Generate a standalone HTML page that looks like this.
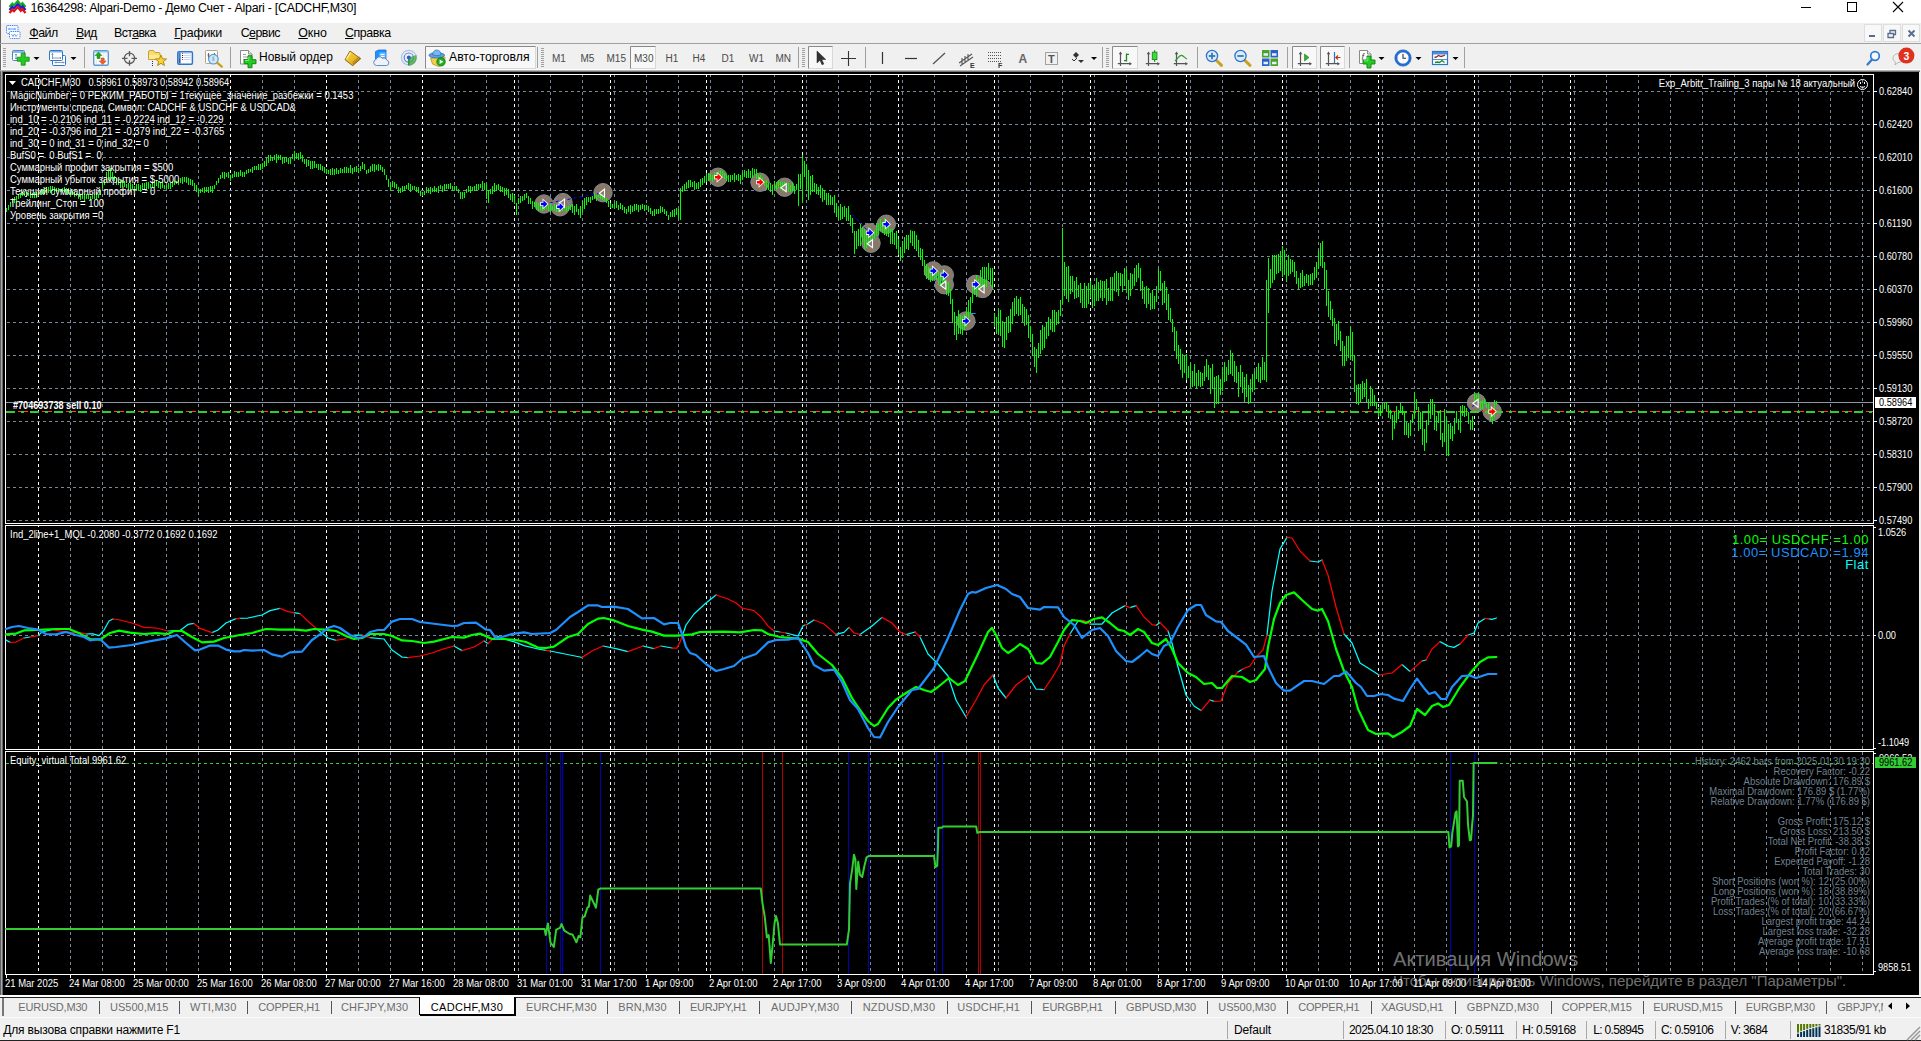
<!DOCTYPE html>
<html><head><meta charset="utf-8"><title>CADCHF,M30</title>
<style>
html,body{margin:0;padding:0}
body{width:1921px;height:1041px;overflow:hidden;position:relative;background:#f0f0f0;font-family:"Liberation Sans",sans-serif;font-size:12px;color:#000}
span{white-space:nowrap;line-height:1}
u{text-decoration:underline;text-underline-offset:1px}
</style></head><body>
<div style="position:absolute;left:0;top:0;width:1921px;height:23px;background:#fff"></div>
<svg style="position:absolute;left:0;top:0" width="30" height="16"><path d="M9.500 7l2.800-3.300l1.700 1.600l3.800-4.200l3 3.800l1.700-1.700l3 3.800" fill="none" stroke="#10b010" stroke-width="2.200"/><path d="M9.500 10l2.800-3.300l1.700 1.600l3.800-4.200l3 3.800l1.700-1.700l3 3.800" fill="none" stroke="#2a18d8" stroke-width="2.200"/><path d="M9.500 13l2.800-3.300l1.700 1.600l3.800-4.200l3 3.800l1.700-1.700l3 3.800" fill="none" stroke="#e01010" stroke-width="2.200"/></svg>
<span style="position:absolute;left:30.500px;top:2px;font-size:12.400px;letter-spacing:-0.270px">16364298: Alpari-Demo - Демо Счет - Alpari - [CADCHF,M30]</span>
<svg style="position:absolute;left:1780px;top:0" width="141" height="22"><path d="M21 7.500h10" stroke="#000"/><rect x="67.500" y="2.500" width="9" height="9" fill="none" stroke="#000"/><path d="M113 2l10 10M123 2l-10 10" stroke="#000" stroke-width="1.100"/></svg>
<div style="position:absolute;left:0;top:0;width:1px;height:1041px;background:#666"></div><div style="position:absolute;left:1px;top:44px;width:1px;height:25px;background:#fff"></div>
<div style="position:absolute;left:0;top:43px;width:1921px;height:1px;background:#a0a0a0"></div>
<svg style="position:absolute;left:5px;top:24px" width="18" height="18"><rect x="1.500" y="1.500" width="11.500" height="8" rx="1" fill="#f4f8fe" stroke="#4a8af0" stroke-dasharray="1.500 0.700"/><path d="M3.500 5h7M4.500 4l-1 1l1 1M9.500 4l1 1l-1 1" stroke="#4a8af0" fill="none" stroke-width="0.800"/><rect x="4.500" y="7.500" width="10.500" height="7" rx="1" fill="#fff" stroke="#4a8af0" stroke-dasharray="1.500 0.700"/><path d="M6.500 10l1.500 2.500l1.500-2.500l1.500 2.500l1.500-2" stroke="#4a8af0" fill="none" stroke-width="0.800"/></svg>
<span style="position:absolute;left:29.3px;top:26.5px;font-size:12.4px;letter-spacing:-0.521px"><u>Ф</u>айл</span><span style="position:absolute;left:76px;top:26.5px;font-size:12.4px;letter-spacing:-0.578px"><u>В</u>ид</span><span style="position:absolute;left:114px;top:26.5px;font-size:12.4px;letter-spacing:-0.627px">Вст<u>а</u>вка</span><span style="position:absolute;left:174.3px;top:26.5px;font-size:12.4px;letter-spacing:-0.227px"><u>Г</u>рафики</span><span style="position:absolute;left:240.7px;top:26.5px;font-size:12.4px;letter-spacing:-0.527px">С<u>е</u>рвис</span><span style="position:absolute;left:298.3px;top:26.5px;font-size:12.4px;letter-spacing:-0.104px"><u>О</u>кно</span><span style="position:absolute;left:345px;top:26.5px;font-size:12.4px;letter-spacing:-0.420px"><u>С</u>правка</span>
<svg style="position:absolute;left:1864px;top:24px" width="57" height="19"><rect x="0.500" y="0.500" width="17" height="17" fill="#f8f8f8" stroke="#dedede"/><rect x="19.500" y="0.500" width="17" height="17" fill="#f8f8f8" stroke="#dedede"/><rect x="38.500" y="0.500" width="17" height="17" fill="#f8f8f8" stroke="#dedede"/><path d="M5 12h6" stroke="#5a6e8c" stroke-width="2"/><path d="M24 9.500h5.500v4h-5.500zM26 9v-2.500h5.500v4h-2" fill="none" stroke="#5a6e8c" stroke-width="1.300"/><path d="M44.500 6.500l6 6M50.500 6.500l-6 6" stroke="#5a6e8c" stroke-width="1.900"/></svg>
<svg style="position:absolute;left:0;top:44px" width="1921" height="26" font-family="Liberation Sans, sans-serif"><rect x="3" y="4" width="3" height="1" fill="#a0a0a0"/><rect x="3" y="6" width="3" height="1" fill="#a0a0a0"/><rect x="3" y="8" width="3" height="1" fill="#a0a0a0"/><rect x="3" y="10" width="3" height="1" fill="#a0a0a0"/><rect x="3" y="12" width="3" height="1" fill="#a0a0a0"/><rect x="3" y="14" width="3" height="1" fill="#a0a0a0"/><rect x="3" y="16" width="3" height="1" fill="#a0a0a0"/><rect x="3" y="18" width="3" height="1" fill="#a0a0a0"/><rect x="3" y="20" width="3" height="1" fill="#a0a0a0"/><rect x="3" y="22" width="3" height="1" fill="#a0a0a0"/><g><rect x="12.500" y="6.500" width="12" height="10" rx="1" fill="#fff" stroke="#4a86c5"/><rect x="13" y="7" width="11" height="2" fill="#8db7e6"/><path d="M16 10v5M15 11l1-1l1 1M15 14l1 1l1-1" stroke="#5a7fb0" fill="none" stroke-width="0.800"/><path d="M21.200 9.200h4v4h4v4h-4v4h-4v-4h-4v-4h4z" fill="#22cc22" stroke="#118811" stroke-width="0.800"/></g><path d="M33.5 13h6l-3 3z" fill="#000"/><g><rect x="52.500" y="11.500" width="13" height="10" rx="1" fill="#fff" stroke="#2e75c8"/><path d="M55 18.500h9M56 17.500l-1 1l1 1M63 17.500l1 1l-1 1" stroke="#6d8fb8" fill="none" stroke-width="0.900"/><rect x="49.500" y="6.500" width="13" height="10" rx="1" fill="#fff" stroke="#2e75c8"/><rect x="50" y="7" width="12" height="1.500" fill="#7fb0e8"/><path d="M52.500 9.500v5.500M52 14h9M51.500 10.500l1-1l1 1M60 13l1 1l-1 1" stroke="#6d8fb8" fill="none" stroke-width="0.900"/></g><path d="M70.5 13h6l-3 3z" fill="#000"/><rect x="84" y="3" width="1" height="21" fill="#a0a0a0"/><g><rect x="93.700" y="6.700" width="14.600" height="14.600" rx="1.500" fill="#fff" stroke="#5b9bd5" stroke-width="1.400"/><rect x="94" y="7" width="14" height="1.500" fill="#8fc0f0"/><path d="M97 14.500v-3h-2l3.500-3.500l3.500 3.500h-2v3z" fill="#1eaa1e" stroke="#0f7a0f" stroke-width="0.500"/><path d="M101.200 14v3h-2l3.500 3.500l3.500-3.500h-2v-3z" fill="#f0602a" stroke="#c03a10" stroke-width="0.500"/><path d="M95.500 17h3M95.500 19h3M103 10h3.500M103 12h3.500" stroke="#d0dce8" stroke-dasharray="1.500 1"/></g><g stroke="#585858" fill="none" stroke-width="1.300"><circle cx="129.500" cy="14.300" r="5.200"/><path d="M129.500 7v5.300M129.500 16.300v5.500M122 14.300h5.500M131.500 14.300h5.500"/></g><g><path d="M148.500 8a1.500 1.500 0 0 1 1.500-1.500h3.500l1.500 2h4a1 1 0 0 1 1 1v6h-11.500z" fill="#f7dc72" stroke="#c49a1c" stroke-width="0.900"/><path d="M149 11h10.500v4h-10.500z" fill="#fbe99a"/><polygon points="161.0,11.0 162.5,14.8 166.5,15.0 163.4,17.6 164.4,21.5 161.0,19.3 157.6,21.5 158.6,17.6 155.5,15.0 159.5,14.8" fill="#f5d53a" stroke="#b8860b" stroke-width="1"/><path d="M152.500 17v5" stroke="#333" stroke-dasharray="1 1"/></g><g><rect x="177.800" y="7.700" width="14.600" height="12.600" rx="1.200" fill="#fff" stroke="#2e75c8" stroke-width="1.500"/><rect x="178.500" y="8.500" width="2.200" height="11" fill="#3a7fd0"/><rect x="179" y="15" width="1" height="4" fill="#555"/><path d="M183.500 9.500h8M183.500 11.500h8M183.500 13.500h8M183.500 15.500h8" stroke="#c6d8f5"/><rect x="182" y="9" width="1" height="1" fill="#e02020"/><rect x="182" y="11" width="1" height="1" fill="#222"/><rect x="182" y="13" width="1" height="1" fill="#222"/><rect x="182" y="15" width="1" height="1" fill="#e02020"/></g><g><rect x="205.500" y="6.500" width="12" height="13" rx="0.800" fill="#fbfbfb" stroke="#b0a890"/><path d="M208.500 9v6M214.500 9v4M207.500 11h2M213.500 10.500h2" stroke="#555" stroke-width="0.900"/><circle cx="213.400" cy="15.200" r="4.800" fill="#cfe6fa" fill-opacity="0.920" stroke="#5b9bd5" stroke-width="1.200"/><rect x="212.300" y="12.500" width="2" height="4.500" fill="#9ab4c8"/><path d="M217.300 18.800l4.500 3.800" stroke="#c9a020" stroke-width="2.400" stroke-linecap="round"/></g><rect x="230" y="3" width="1" height="21" fill="#a0a0a0"/><g><path d="M240.500 6.500h8l3.500 3.500v10h-11.500z" fill="#fff" stroke="#8a8a8a"/><path d="M248.500 6.500v3.500h3.500" fill="#e8e8e8" stroke="#8a8a8a"/><path d="M243 10.500h3M243 13h6M243 15.500h4" stroke="#9a9a9a"/><path d="M248 11.7h4v4h4v4h-4v4h-4v-4h-4v-4h4z" fill="#22cc22" stroke="#0f7f0f" stroke-width="0.900"/><path d="M248.8 12.7v3.8h-3.8" stroke="#8af08a" stroke-width="0.900" fill="none"/></g><defs><linearGradient id="gbk" x1="0" y1="0" x2="1" y2="1"><stop offset="0" stop-color="#fbe04a"/><stop offset="0.600" stop-color="#e6b422"/><stop offset="1" stop-color="#b07c10"/></linearGradient></defs><g><path d="M350 7l10.700 7.700l-8 7l-7.700-6z" fill="url(#gbk)" stroke="#8a5e0c" stroke-width="0.900" stroke-linejoin="round"/><path d="M353 20l7.200-6.200M352.600 18.600l6.800-5.800" stroke="#8a5e0c" stroke-width="0.600" fill="none"/><path d="M350.500 8.500l-4 6.500" stroke="#fff4b0" stroke-width="1.200"/></g><g><path d="M375.500 7.500l3-1.500h7.500v9h-10.500z" fill="#1e90ff" stroke="#1a6fd0" stroke-width="0.800"/><path d="M379.500 8.500h6v6h-6z" fill="#6fc0ff"/><path d="M380.500 10.500h4M380.500 12.500h4" stroke="#fff" stroke-width="0.900"/><path d="M376.500 21.500a3 3 0 0 1-0.500-5.900a3.600 3.600 0 0 1 6.500-1.200a3 3 0 0 1 4.300 1.800a2.700 2.700 0 0 1-0.300 5.300z" fill="#eef3fb" stroke="#5a7fb8" stroke-width="0.900"/></g><g fill="none"><circle cx="408.800" cy="13.600" r="7.300" stroke="#a8c4ee" stroke-width="1.200"/><circle cx="408.800" cy="13.600" r="4.600" stroke="#5a86dc" stroke-width="1.200"/><path d="M408.800 13.600v8a8 8 0 0 0 7.600-10.500z" fill="#4aa84a" fill-opacity="0.800"/><path d="M408.800 13.600v8" stroke="#2f9a2f" stroke-width="1.600"/><circle cx="408.800" cy="13.400" r="2" fill="#2a5fd0"/></g><rect x="425.500" y="2.500" width="110" height="22" fill="#f8f8f8" stroke="#d8d8d8"/><path d="M425.500 24.500v-22h110" fill="none" stroke="#8a8a8a"/><g><path d="M430.500 14l2 6l6 2.500l6-2.500l0.500-7z" fill="#f2cf4a" stroke="#b8902a" stroke-width="0.800"/><ellipse cx="436.800" cy="11.300" rx="7.800" ry="2.700" fill="#5aa0e0" stroke="#2f6fb8" stroke-width="0.800"/><path d="M432.800 10.800c0-3 1.500-4.800 4-4.800s4 1.800 4 4.800c-2 1-6 1-8 0z" fill="#7ab8ee" stroke="#2f6fb8" stroke-width="0.700"/><circle cx="441" cy="17.800" r="4.200" fill="#1fae1f" stroke="#0f7a0f" stroke-width="0.800"/><path d="M439.600 15.500v4.600l3.800-2.300z" fill="#fff"/></g><rect x="537" y="3" width="1" height="21" fill="#a0a0a0"/><rect x="541" y="4" width="3" height="1" fill="#a0a0a0"/><rect x="541" y="6" width="3" height="1" fill="#a0a0a0"/><rect x="541" y="8" width="3" height="1" fill="#a0a0a0"/><rect x="541" y="10" width="3" height="1" fill="#a0a0a0"/><rect x="541" y="12" width="3" height="1" fill="#a0a0a0"/><rect x="541" y="14" width="3" height="1" fill="#a0a0a0"/><rect x="541" y="16" width="3" height="1" fill="#a0a0a0"/><rect x="541" y="18" width="3" height="1" fill="#a0a0a0"/><rect x="541" y="20" width="3" height="1" fill="#a0a0a0"/><rect x="541" y="22" width="3" height="1" fill="#a0a0a0"/><rect x="630.500" y="2.500" width="25" height="22" fill="#f8f8f8" stroke="#d8d8d8"/><path d="M630.500 24.500v-22h25" fill="none" stroke="#8a8a8a"/><rect x="798" y="3" width="1" height="21" fill="#a0a0a0"/><rect x="802" y="4" width="3" height="1" fill="#a0a0a0"/><rect x="802" y="6" width="3" height="1" fill="#a0a0a0"/><rect x="802" y="8" width="3" height="1" fill="#a0a0a0"/><rect x="802" y="10" width="3" height="1" fill="#a0a0a0"/><rect x="802" y="12" width="3" height="1" fill="#a0a0a0"/><rect x="802" y="14" width="3" height="1" fill="#a0a0a0"/><rect x="802" y="16" width="3" height="1" fill="#a0a0a0"/><rect x="802" y="18" width="3" height="1" fill="#a0a0a0"/><rect x="802" y="20" width="3" height="1" fill="#a0a0a0"/><rect x="802" y="22" width="3" height="1" fill="#a0a0a0"/><rect x="808.500" y="2.500" width="24" height="22" fill="#f8f8f8" stroke="#d8d8d8"/><path d="M808.500 24.500v-22h24" fill="none" stroke="#8a8a8a"/><path d="M817 7v12l3-2.800l2 4.600l1.800-0.800l-2-4.500h4z" fill="#333" stroke="#222" stroke-width="0.500"/><path d="M848.500 7v15M841 14.500h15" stroke="#333" stroke-width="1.100"/><rect x="865" y="3" width="1" height="21" fill="#a0a0a0"/><path d="M882.500 8v12" stroke="#333" stroke-width="1.200"/><path d="M905 14.500h12" stroke="#333" stroke-width="1.200"/><path d="M933 20l12-11" stroke="#555" stroke-width="1.300"/><g stroke="#555" stroke-width="1.100" fill="none"><path d="M959 19l13-9M960 22l13-9M962 14v7M965 12v7M968 10v7"/></g><text x="970" y="24" font-size="7" font-weight="bold" fill="#333">E</text><g stroke="#555" stroke-dasharray="1 1"><path d="M988 8.500h13M988 11.500h13M988 14.500h13M988 17.500h13"/></g><text x="998" y="24" font-size="7" font-weight="bold" fill="#333">F</text><text x="1018.500" y="19" font-size="12" font-weight="bold" fill="#666">A</text><rect x="1045.500" y="8.500" width="12" height="12" fill="none" stroke="#555" stroke-dasharray="1 1"/><text x="1048" y="19" font-size="11" font-weight="bold" fill="#555">T</text><g fill="#333"><path d="M1073 11l3-3l3 3l-3 3z"/><path d="M1078 16l3 3l3-3z"/><path d="M1072 15l2 2l3-3" stroke="#333" fill="none"/></g><path d="M1091 13h6l-3 3z" fill="#000"/><rect x="1102" y="3" width="1" height="21" fill="#a0a0a0"/><rect x="1106" y="4" width="3" height="1" fill="#a0a0a0"/><rect x="1106" y="6" width="3" height="1" fill="#a0a0a0"/><rect x="1106" y="8" width="3" height="1" fill="#a0a0a0"/><rect x="1106" y="10" width="3" height="1" fill="#a0a0a0"/><rect x="1106" y="12" width="3" height="1" fill="#a0a0a0"/><rect x="1106" y="14" width="3" height="1" fill="#a0a0a0"/><rect x="1106" y="16" width="3" height="1" fill="#a0a0a0"/><rect x="1106" y="18" width="3" height="1" fill="#a0a0a0"/><rect x="1106" y="20" width="3" height="1" fill="#a0a0a0"/><rect x="1106" y="22" width="3" height="1" fill="#a0a0a0"/><rect x="1112.500" y="2.500" width="25" height="22" fill="#f8f8f8" stroke="#d8d8d8"/><path d="M1112.500 24.500v-22h25" fill="none" stroke="#8a8a8a"/><g stroke="#555" fill="none" stroke-width="1.200"><path d="M1120.5 9v13M1117.8 19.700h13"/></g><path d="M1120.5 7.500l-1.800 2.700h3.600zM1132.0 19.700l-2.700-1.800v3.600z" fill="#555"/><path d="M1126.500 9.500v8M1126.500 10.300h2.500M1124 16.600h2.500" stroke="#1c8a1c" fill="none" stroke-width="1.300"/><g stroke="#555" fill="none" stroke-width="1.200"><path d="M1148.5 9v13M1145.8 19.700h13"/></g><path d="M1148.5 7.500l-1.800 2.700h3.600zM1160.0 19.700l-2.700-1.800v3.600z" fill="#555"/><path d="M1154.600 6.300v11.500" stroke="#1c8a1c" stroke-width="1.200"/><rect x="1152.300" y="8.200" width="4.600" height="7.400" fill="#3ae03a" stroke="#1c8a1c" stroke-width="0.900"/><g stroke="#555" fill="none" stroke-width="1.200"><path d="M1176.5 9v13M1173.8 19.700h13"/></g><path d="M1176.5 7.500l-1.800 2.700h3.600zM1188.0 19.700l-2.700-1.800v3.600z" fill="#555"/><path d="M1175 17c2.500-2 4-6 6.500-5.700c2 0.300 3.500 3 5.500 3.700" stroke="#2a9a2a" fill="none" stroke-width="1.200"/><rect x="1197" y="3" width="1" height="21" fill="#a0a0a0"/><g><path d="M1216 16l5.500 5.300" stroke="#c9a020" stroke-width="3" stroke-linecap="round"/><circle cx="1212" cy="12" r="5.600" fill="#d8ecfb" stroke="#2f72c8" stroke-width="1.300"/><path d="M1208.8 12h6.400M1212 8.800v6.400" stroke="#3f7fb8" stroke-width="1.900"/></g><g><path d="M1244.5 16l5.500 5.300" stroke="#c9a020" stroke-width="3" stroke-linecap="round"/><circle cx="1240.5" cy="12" r="5.600" fill="#d8ecfb" stroke="#2f72c8" stroke-width="1.300"/><path d="M1237.3 12h6.400" stroke="#3f7fb8" stroke-width="1.900"/></g><g><rect x="1262" y="6" width="7.500" height="7.500" fill="#4aa32a"/><rect x="1270.500" y="6" width="7.500" height="7.500" fill="#2a63c8"/><rect x="1262" y="14.500" width="7.500" height="7.500" fill="#2a63c8"/><rect x="1270.500" y="14.500" width="7.500" height="7.500" fill="#4aa32a"/><path d="M1263.500 10.500h4.500M1272 10.500h4.500M1263.500 19h4.500M1272 19h4.500" stroke="#e8f0ff" stroke-width="2.500"/></g><rect x="1287" y="3" width="1" height="21" fill="#a0a0a0"/><rect x="1292.500" y="2.500" width="24" height="22" fill="#f8f8f8" stroke="#d8d8d8"/><path d="M1292.500 24.500v-22h24" fill="none" stroke="#8a8a8a"/><g stroke="#555" fill="none" stroke-width="1.200"><path d="M1300.5 9v13M1297.8 19.700h13"/></g><path d="M1300.5 7.500l-1.800 2.700h3.600zM1312.0 19.700l-2.700-1.800v3.600z" fill="#555"/><path d="M1304.500 10v7l4.500-3.500z" fill="#2fae2f" stroke="#1c8a1c" stroke-width="0.600"/><rect x="1320.500" y="2.500" width="24" height="22" fill="#f8f8f8" stroke="#d8d8d8"/><path d="M1320.500 24.500v-22h24" fill="none" stroke="#8a8a8a"/><g stroke="#555" fill="none" stroke-width="1.200"><path d="M1328.5 9v13M1325.8 19.700h13"/></g><path d="M1328.5 7.500l-1.800 2.700h3.600zM1340.0 19.700l-2.700-1.800v3.600z" fill="#555"/><path d="M1334.500 8v11" stroke="#2e6fc0" stroke-width="1.200"/><path d="M1340.500 13.500h-4.500M1338 11.500l-2.200 2l2.200 2" stroke="#c03010" fill="none" stroke-width="1.100"/><rect x="1349" y="3" width="1" height="21" fill="#a0a0a0"/><g><path d="M1359.500 6.500h8l3.500 3.500v9.500h-11.500z" fill="#fff" stroke="#8a8a8a"/><path d="M1367.500 6.500v3.500h3.500" fill="#e8e8e8" stroke="#8a8a8a"/><text x="1361.500" y="16" font-size="9" font-style="italic" fill="#444">f</text><path d="M1367 12h4v4h4v4h-4v4h-4v-4h-4v-4h4z" fill="#22cc22" stroke="#0f7f0f" stroke-width="0.900"/><path d="M1367.8 13v3.8h-3.8" stroke="#8af08a" stroke-width="0.900" fill="none"/></g><path d="M1378.5 13h6l-3 3z" fill="#000"/><g><circle cx="1403" cy="14" r="6.900" fill="#fff" stroke="#1e6fd8" stroke-width="2.400"/><circle cx="1403" cy="14" r="8.200" fill="none" stroke="#0f4fa8" stroke-width="0.600"/><path d="M1403 10v4.300h3" stroke="#333" fill="none" stroke-width="1.100"/><path d="M1403 8.300v1M1403 18.700v1M1397.300 14h1M1407.700 14h1" stroke="#888" stroke-width="0.800"/></g><path d="M1415.5 13h6l-3 3z" fill="#000"/><g><rect x="1432.500" y="7.500" width="15" height="13" fill="#fff" stroke="#2e75c8" stroke-width="1.200"/><rect x="1433" y="8" width="14" height="2.500" fill="#4a8fe0"/><path d="M1433 15.500h14" stroke="#2e75c8" stroke-width="0.800"/><path d="M1434.500 13.500l2-0.500l2-1.500l2.500 1l2-0.500l2-1" stroke="#a02010" fill="none" stroke-width="1.300"/><path d="M1435 18.500l2.500-0.500l2 0.500l2.500-2l2.500 2" stroke="#1c8a2c" fill="none" stroke-width="1.300"/></g><path d="M1452.5 13h6l-3 3z" fill="#000"/><rect x="1464" y="3" width="1" height="21" fill="#a0a0a0"/><g><circle cx="1875" cy="12" r="4.300" fill="#f4f9ff" stroke="#2f7ad0" stroke-width="1.700"/><path d="M1872 15.500l-4.500 5" stroke="#2f7ad0" stroke-width="2.200" stroke-linecap="round"/></g><g><path d="M1893 14a5.500 4.500 0 1 1 5 4.500l-3 2.500l0.500-3a5 4 0 0 1-2.500-4z" fill="#f0f0f0" stroke="#b8b8b8"/><circle cx="1906.400" cy="11.600" r="8" fill="#e0301e"/><text x="1906.400" y="15.500" font-size="10.500" font-weight="bold" fill="#fff" text-anchor="middle">3</text></g></svg><span style="position:absolute;left:552px;top:54px;font-size:10px;color:#4a4a4a">M1</span><span style="position:absolute;left:580.5px;top:54px;font-size:10px;color:#4a4a4a">M5</span><span style="position:absolute;left:606.5px;top:54px;font-size:10px;color:#4a4a4a">M15</span><span style="position:absolute;left:634px;top:54px;font-size:10px;color:#4a4a4a">M30</span><span style="position:absolute;left:665.5px;top:54px;font-size:10px;color:#4a4a4a">H1</span><span style="position:absolute;left:692.5px;top:54px;font-size:10px;color:#4a4a4a">H4</span><span style="position:absolute;left:721.5px;top:54px;font-size:10px;color:#4a4a4a">D1</span><span style="position:absolute;left:749px;top:54px;font-size:10px;color:#4a4a4a">W1</span><span style="position:absolute;left:775.5px;top:54px;font-size:10px;color:#4a4a4a">MN</span><span style="position:absolute;left:259px;top:51px;font-size:12px;color:#000">Новый ордер</span><span style="position:absolute;left:449px;top:51px;font-size:12.200px;color:#000">Авто-торговля</span>
<svg style="position:absolute;left:0;top:69px" width="1921" height="928" viewBox="0 69 1921 928"><rect x="1" y="69" width="1920" height="1" fill="#fcfcfc"/><rect x="0" y="69" width="1" height="927" fill="#606060"/><rect x="0" y="70" width="1920" height="1" fill="#b4b4b4"/><rect x="0" y="71" width="1920" height="1" fill="#747474"/><rect x="1" y="71" width="1" height="924" fill="#a8a8a8"/><rect x="2" y="72" width="1" height="923" fill="#686868"/>
<rect x="3" y="72" width="1916" height="923" fill="#000"/>
<path d="M38.5 74V974M70.5 74V974M102.5 74V974M134.5 74V974M166.5 74V974M198.5 74V974M230.5 74V974M262.5 74V974M294.5 74V974M326.5 74V974M358.5 74V974M390.5 74V974M422.5 74V974M454.5 74V974M486.5 74V974M518.5 74V974M550.5 74V974M582.5 74V974M614.5 74V974M646.5 74V974M678.5 74V974M710.5 74V974M742.5 74V974M774.5 74V974M806.5 74V974M838.5 74V974M870.5 74V974M902.5 74V974M934.5 74V974M966.5 74V974M998.5 74V974M1030.5 74V974M1062.5 74V974M1094.5 74V974M1126.5 74V974M1158.5 74V974M1190.5 74V974M1222.5 74V974M1254.5 74V974M1286.5 74V974M1318.5 74V974M1350.5 74V974M1382.5 74V974M1414.5 74V974M1446.5 74V974M1478.5 74V974M1510.5 74V974M1542.5 74V974M1574.5 74V974M1606.5 74V974M1638.5 74V974M1670.5 74V974M1702.5 74V974M1734.5 74V974M1766.5 74V974M1798.5 74V974M1830.5 74V974M1862.5 74V974" stroke="#778899" stroke-dasharray="3 3" fill="none" shape-rendering="crispEdges"/>
<path d="M38.5 74V974M134.5 74V974M230.5 74V974M326.5 74V974M422.5 74V974M514.5 74V974M610.5 74V974M706.5 74V974M802.5 74V974M898.5 74V974M994.5 74V974M1090.5 74V974M1186.5 74V974M1282.5 74V974M1378.5 74V974M1474.5 74V974M1570.5 74V974" stroke="#fff" stroke-dasharray="3 3" fill="none" shape-rendering="crispEdges"/>
<rect x="5" y="524" width="1870" height="1" fill="#000"/><rect x="5" y="750" width="1870" height="1" fill="#000"/>
<path d="M7 91.5H1873M7 124.5H1873M7 157.5H1873M7 190.5H1873M7 223.5H1873M7 256.5H1873M7 289.5H1873M7 322.5H1873M7 355.5H1873M7 388.5H1873M7 421.5H1873M7 454.5H1873M7 487.5H1873M7 520.5H1873M7 635.5H1873" stroke="#778899" stroke-dasharray="3 3" fill="none" shape-rendering="crispEdges"/>
<circle cx="543.9" cy="204.0" r="9.2" fill="#8a7866" stroke="#7d8a99" stroke-width="1"/>
<circle cx="563.0" cy="202.6" r="9.2" fill="#8a7866" stroke="#7d8a99" stroke-width="1"/>
<circle cx="560.1" cy="206.8" r="9.2" fill="#8a7866" stroke="#7d8a99" stroke-width="1"/>
<circle cx="603.0" cy="192.7" r="9.2" fill="#8a7866" stroke="#7d8a99" stroke-width="1"/>
<circle cx="718.0" cy="177.2" r="9.2" fill="#8a7866" stroke="#7d8a99" stroke-width="1"/>
<circle cx="760.0" cy="182.2" r="9.2" fill="#8a7866" stroke="#7d8a99" stroke-width="1"/>
<circle cx="784.7" cy="187.2" r="9.2" fill="#8a7866" stroke="#7d8a99" stroke-width="1"/>
<circle cx="886.3" cy="224.2" r="9.2" fill="#8a7866" stroke="#7d8a99" stroke-width="1"/>
<circle cx="871.0" cy="243.2" r="9.2" fill="#8a7866" stroke="#7d8a99" stroke-width="1"/>
<circle cx="869.7" cy="232.8" r="9.2" fill="#8a7866" stroke="#7d8a99" stroke-width="1"/>
<circle cx="933.4" cy="270.9" r="9.2" fill="#8a7866" stroke="#7d8a99" stroke-width="1"/>
<circle cx="944.3" cy="284.7" r="9.2" fill="#8a7866" stroke="#7d8a99" stroke-width="1"/>
<circle cx="944.3" cy="274.9" r="9.2" fill="#8a7866" stroke="#7d8a99" stroke-width="1"/>
<circle cx="975.7" cy="284.4" r="9.2" fill="#8a7866" stroke="#7d8a99" stroke-width="1"/>
<circle cx="982.6" cy="288.5" r="9.2" fill="#8a7866" stroke="#7d8a99" stroke-width="1"/>
<circle cx="965.9" cy="321.0" r="9.2" fill="#8a7866" stroke="#7d8a99" stroke-width="1"/>
<circle cx="1476.6" cy="402.8" r="9.2" fill="#8a7866" stroke="#7d8a99" stroke-width="1"/>
<circle cx="1492.2" cy="411.6" r="9.2" fill="#8a7866" stroke="#7d8a99" stroke-width="1"/>
<line x1="544" y1="204" x2="603" y2="192.7" stroke="#0000ff" stroke-dasharray="3 3" stroke-width="1"/>
<line x1="560" y1="207" x2="563" y2="202.6" stroke="#0000ff" stroke-dasharray="3 3" stroke-width="1"/>
<line x1="760" y1="182.2" x2="784.7" y2="187.2" stroke="#ff0000" stroke-dasharray="3 3" stroke-width="1"/>
<line x1="848" y1="210" x2="870" y2="233" stroke="#0000ff" stroke-dasharray="3 3" stroke-width="1"/>
<line x1="933" y1="271" x2="944" y2="285" stroke="#0000ff" stroke-dasharray="3 3" stroke-width="1"/>
<line x1="1450" y1="427" x2="1476.6" y2="402.8" stroke="#0000ff" stroke-dasharray="3 3" stroke-width="1"/>
<line x1="969.7" y1="313.5" x2="975.7" y2="313.5" stroke="#1e90ff" stroke-width="1"/>
<rect x="6" y="402" width="1867" height="1" fill="#8a97a6"/>
<line x1="18" y1="411.5" x2="1873" y2="411.5" stroke="#ff4500" stroke-dasharray="3 3 4 14" shape-rendering="crispEdges"/>
<line x1="6" y1="412" x2="1873" y2="412" stroke="#32cd32" stroke-width="2" stroke-dasharray="9 6 3 6" shape-rendering="crispEdges"/>
<path d="M6.5 208V212M8.5 205V210M10.5 202V207M12.5 198V203M14.5 197V203M16.5 196V201M18.5 194V199M20.5 193V198M22.5 192V196M24.5 191V196M26.5 192V197M28.5 193V196M30.5 192V198M32.5 193V198M34.5 192V198M36.5 192V198M38.5 191V196M40.5 191V195M42.5 189V194M44.5 188V194M46.5 187V193M48.5 187V193M50.5 186V193M52.5 186V191M54.5 187V194M56.5 188V192M58.5 188V192M60.5 189V192M62.5 188V192M64.5 187V192M66.5 188V195M68.5 188V194M70.5 191V197M72.5 191V195M74.5 192V197M76.5 193V196M78.5 194V199M80.5 194V200M82.5 194V199M84.5 194V201M86.5 194V199M88.5 194V199M90.5 196V200M92.5 195V199M94.5 195V199M96.5 192V199M98.5 194V198M100.5 190V195M102.5 182V188M104.5 179V185M106.5 172V181M108.5 170V180M110.5 168V180M112.5 172V181M114.5 176V181M116.5 178V185M118.5 181V185M120.5 180V188M122.5 180V187M124.5 181V187M126.5 184V188M128.5 183V190M130.5 183V191M132.5 184V189M134.5 186V190M136.5 184V191M138.5 184V191M140.5 185V192M142.5 183V189M144.5 183V189M146.5 182V189M148.5 182V189M150.5 184V188M152.5 182V188M154.5 181V188M156.5 181V186M158.5 181V188M160.5 182V189M162.5 182V188M164.5 185V189M166.5 185V189M168.5 183V189M170.5 183V189M172.5 181V187M174.5 180V185M176.5 181V184M178.5 180V185M180.5 178V183M182.5 177V184M184.5 177V182M186.5 177V183M188.5 178V185M190.5 179V185M192.5 180V186M194.5 183V190M196.5 185V192M198.5 189V196M200.5 189V193M202.5 188V192M204.5 187V193M206.5 187V192M208.5 187V193M210.5 186V192M212.5 186V193M214.5 185V189M216.5 181V185M218.5 178V183M220.5 175V179M222.5 172V178M224.5 172V179M226.5 173V177M228.5 172V178M230.5 175V181M232.5 174V178M234.5 171V177M236.5 172V177M238.5 172V177M240.5 170V176M242.5 172V177M244.5 172V177M246.5 170V174M248.5 169V173M250.5 169V172M252.5 167V173M254.5 166V170M256.5 166V170M258.5 164V170M260.5 164V170M262.5 163V169M264.5 161V167M266.5 158V166M268.5 155V163M270.5 155V161M272.5 157V161M274.5 155V160M276.5 154V163M278.5 155V160M280.5 155V160M282.5 157V164M284.5 157V163M286.5 157V162M288.5 158V164M290.5 158V164M292.5 154V159M294.5 151V160M296.5 153V159M298.5 153V160M300.5 152V159M302.5 155V162M304.5 159V164M306.5 159V167M308.5 160V166M310.5 161V169M312.5 161V169M314.5 161V168M316.5 164V168M318.5 164V170M320.5 164V170M322.5 166V171M324.5 167V173M326.5 169V174M328.5 170V174M330.5 169V175M332.5 168V175M334.5 169V175M336.5 168V174M338.5 170V174M340.5 168V173M342.5 169V173M344.5 167V173M346.5 167V173M348.5 168V173M350.5 165V173M352.5 168V174M354.5 167V172M356.5 166V172M358.5 168V173M360.5 166V171M362.5 162V169M364.5 164V170M366.5 170V174M368.5 169V173M370.5 166V172M372.5 164V171M374.5 164V172M376.5 165V170M378.5 164V171M380.5 165V170M382.5 167V172M384.5 169V175M386.5 175V180M388.5 179V187M390.5 184V191M392.5 181V187M394.5 182V188M396.5 184V189M398.5 187V193M400.5 188V193M402.5 186V192M404.5 186V191M406.5 185V189M408.5 183V190M410.5 184V192M412.5 186V190M414.5 186V190M416.5 187V192M418.5 187V193M420.5 191V196M422.5 192V196M424.5 191V195M426.5 187V193M428.5 188V193M430.5 187V194M432.5 188V192M434.5 186V192M436.5 188V192M438.5 186V193M440.5 185V189M442.5 186V192M444.5 184V191M446.5 184V189M448.5 184V189M450.5 183V189M452.5 186V191M454.5 186V190M456.5 186V191M458.5 189V193M460.5 192V199M462.5 192V199M464.5 192V198M466.5 189V193M468.5 186V192M470.5 186V193M472.5 187V191M474.5 186V191M476.5 184V191M478.5 184V190M480.5 184V188M482.5 181V190M484.5 183V190M486.5 184V199M488.5 190V203M490.5 189V194M492.5 186V194M494.5 183V192M496.5 185V191M498.5 184V190M500.5 186V192M502.5 187V192M504.5 188V196M506.5 188V195M508.5 189V198M510.5 194V200M512.5 193V202M514.5 195V204M516.5 203V215M518.5 198V204M520.5 196V203M522.5 196V201M524.5 194V200M526.5 193V198M528.5 196V204M530.5 198V204M532.5 201V209M534.5 202V207M536.5 202V210M538.5 203V211M540.5 203V211M542.5 205V211M544.5 206V210M546.5 205V209M548.5 205V211M550.5 203V212M552.5 206V210M554.5 204V211M556.5 205V212M558.5 204V212M560.5 205V212M562.5 205V211M564.5 205V210M566.5 206V212M568.5 206V211M570.5 205V210M572.5 204V213M574.5 206V215M576.5 204V212M578.5 209V215M580.5 206V218M582.5 201V212M584.5 198V209M586.5 197V205M588.5 197V202M590.5 197V203M592.5 196V200M594.5 193V199M596.5 195V201M598.5 195V198M600.5 193V199M602.5 194V200M604.5 196V201M606.5 198V203M608.5 201V207M610.5 203V208M612.5 204V208M614.5 203V209M616.5 201V208M618.5 205V210M620.5 203V209M622.5 205V210M624.5 207V213M626.5 209V214M628.5 206V212M630.5 205V214M632.5 206V212M634.5 204V211M636.5 204V210M638.5 205V212M640.5 205V210M642.5 204V209M644.5 205V211M646.5 205V210M648.5 206V212M650.5 208V214M652.5 211V216M654.5 209V216M656.5 209V214M658.5 209V214M660.5 206V213M662.5 207V212M664.5 209V214M666.5 211V216M668.5 215V220M670.5 212V217M672.5 210V217M674.5 209V217M676.5 208V215M678.5 209V219M680.5 188V220M682.5 186V192M684.5 184V191M686.5 182V189M688.5 180V188M690.5 180V187M692.5 182V187M694.5 181V190M696.5 183V189M698.5 182V189M700.5 179V187M702.5 178V185M704.5 176V183M706.5 173V182M708.5 173V181M710.5 174V180M712.5 175V182M714.5 172V180M716.5 173V177M718.5 171V179M720.5 170V178M722.5 171V178M724.5 173V179M726.5 175V181M728.5 175V182M730.5 175V182M732.5 175V180M734.5 173V182M736.5 175V180M738.5 174V181M740.5 175V184M742.5 172V180M744.5 170V177M746.5 171V178M748.5 169V178M750.5 171V178M752.5 168V178M754.5 169V175M756.5 169V179M758.5 175V182M760.5 175V183M762.5 177V183M764.5 181V186M766.5 180V190M768.5 183V190M770.5 183V192M772.5 185V195M774.5 181V189M776.5 182V190M778.5 180V188M780.5 182V189M782.5 182V191M784.5 182V191M786.5 183V192M788.5 183V192M790.5 185V192M792.5 182V191M794.5 186V194M796.5 184V190M798.5 174V206M800.5 174V189M802.5 155V203M804.5 161V177M806.5 165V190M808.5 170V200M810.5 176V195M812.5 175V192M814.5 183V192M816.5 184V194M818.5 187V195M820.5 185V198M822.5 188V202M824.5 190V200M826.5 193V205M828.5 193V205M830.5 195V205M832.5 197V205M834.5 195V213M836.5 203V217M838.5 207V220M840.5 204V220M842.5 207V219M844.5 206V217M846.5 208V221M848.5 206V221M850.5 215V226M852.5 218V233M854.5 231V254M856.5 231V249M858.5 229V246M860.5 224V246M862.5 227V242M864.5 229V249M866.5 235V248M868.5 231V244M870.5 228V243M872.5 234V248M874.5 230V239M876.5 223V236M878.5 223V234M880.5 219V231M882.5 222V233M884.5 218V235M886.5 223V236M888.5 225V237M890.5 229V244M892.5 229V244M894.5 233V245M896.5 231V249M898.5 239V255M900.5 247V261M902.5 241V258M904.5 237V253M906.5 235V249M908.5 235V250M910.5 230V243M912.5 231V246M914.5 231V249M916.5 235V251M918.5 240V257M920.5 248V260M922.5 249V266M924.5 260V275M926.5 264V279M928.5 267V280M930.5 268V282M932.5 268V281M934.5 269V279M936.5 270V280M938.5 271V285M940.5 275V285M942.5 271V288M944.5 273V289M946.5 282V295M948.5 282V296M950.5 289V304M952.5 299V323M954.5 312V335M956.5 316V340M958.5 310V334M960.5 315V334M962.5 316V335M964.5 314V330M966.5 307V327M968.5 300V322M970.5 297V314M972.5 286V303M974.5 280V295M976.5 275V297M978.5 279V290M980.5 270V288M982.5 267V289M984.5 267V288M986.5 267V287M988.5 263V280M990.5 268V286M992.5 268V289M994.5 313V327M996.5 317V334M998.5 309V334M1000.5 310V336M1002.5 321V347M1004.5 322V348M1006.5 317V340M1008.5 316V333M1010.5 309V332M1012.5 302V324M1014.5 298V316M1016.5 296V314M1018.5 299V316M1020.5 297V315M1022.5 304V322M1024.5 307V326M1026.5 309V325M1028.5 315V338M1030.5 326V342M1032.5 334V356M1034.5 347V367M1036.5 349V373M1038.5 343V358M1040.5 330V354M1042.5 325V350M1044.5 327V348M1046.5 322V339M1048.5 317V336M1050.5 319V330M1052.5 310V332M1054.5 310V332M1056.5 312V325M1058.5 310V324M1060.5 300V316M1062.5 228V304M1064.5 262V296M1066.5 267V299M1068.5 266V302M1070.5 276V294M1072.5 276V292M1074.5 281V299M1076.5 277V298M1078.5 285V297M1080.5 283V303M1082.5 290V308M1084.5 283V308M1086.5 286V308M1088.5 283V304M1090.5 281V298M1092.5 285V308M1094.5 286V306M1096.5 278V301M1098.5 282V301M1100.5 280V298M1102.5 281V301M1104.5 281V298M1106.5 279V305M1108.5 288V301M1110.5 277V301M1112.5 277V301M1114.5 273V291M1116.5 271V292M1118.5 273V296M1120.5 273V286M1122.5 274V292M1124.5 268V286M1126.5 269V293M1128.5 280V300M1130.5 273V296M1132.5 274V289M1134.5 268V286M1136.5 265V282M1138.5 263V278M1140.5 268V291M1142.5 281V299M1144.5 287V304M1146.5 286V308M1148.5 288V304M1150.5 293V310M1152.5 290V309M1154.5 296V309M1156.5 286V302M1158.5 269V290M1160.5 271V291M1162.5 283V305M1164.5 281V303M1166.5 287V310M1168.5 294V320M1170.5 308V322M1172.5 319V332M1174.5 327V351M1176.5 331V359M1178.5 345V364M1180.5 349V370M1182.5 354V378M1184.5 356V373M1186.5 354V380M1188.5 366V378M1190.5 363V387M1192.5 371V387M1194.5 364V386M1196.5 373V389M1198.5 370V386M1200.5 372V387M1202.5 373V386M1204.5 366V381M1206.5 359V377M1208.5 365V380M1210.5 368V394M1212.5 364V389M1214.5 377V408M1216.5 376V404M1218.5 375V404M1220.5 379V395M1222.5 367V391M1224.5 362V382M1226.5 367V381M1228.5 360V375M1230.5 350V374M1232.5 353V376M1234.5 361V382M1236.5 366V383M1238.5 372V397M1240.5 365V387M1242.5 372V393M1244.5 377V402M1246.5 374V397M1248.5 385V404M1250.5 379V403M1252.5 374V392M1254.5 371V390M1256.5 367V379M1258.5 363V382M1260.5 367V383M1262.5 357V380M1264.5 362V380M1266.5 280V382M1268.5 258V313M1270.5 269V288M1272.5 255V283M1274.5 255V280M1276.5 255V274M1278.5 254V273M1280.5 251V271M1282.5 246V277M1284.5 250V275M1286.5 260V282M1288.5 255V276M1290.5 259V274M1292.5 260V272M1294.5 262V277M1296.5 271V284M1298.5 278V289M1300.5 273V288M1302.5 270V287M1304.5 276V286M1306.5 274V283M1308.5 275V286M1310.5 274V285M1312.5 273V285M1314.5 267V280M1316.5 262V278M1318.5 250V269M1320.5 243V266M1322.5 241V268M1324.5 262V289M1326.5 270V306M1328.5 291V317M1330.5 301V320M1332.5 309V326M1334.5 318V344M1336.5 324V346M1338.5 321V340M1340.5 331V351M1342.5 341V366M1344.5 346V366M1346.5 336V361M1348.5 336V358M1350.5 327V360M1352.5 332V361M1354.5 355V392M1356.5 385V404M1358.5 384V405M1360.5 384V402M1362.5 381V399M1364.5 383V397M1366.5 379V402M1368.5 399V409M1370.5 386V406M1372.5 389V406M1374.5 395V406M1376.5 402V409M1378.5 408V417M1380.5 405V416M1382.5 403V413M1384.5 403V409M1386.5 402V411M1388.5 405V418M1390.5 410V419M1392.5 415V440M1394.5 412V429M1396.5 406V423M1398.5 410V419M1400.5 403V413M1402.5 406V415M1404.5 412V435M1406.5 422V435M1408.5 423V438M1410.5 420V436M1412.5 414V423M1414.5 392V418M1416.5 399V410M1418.5 407V431M1420.5 412V429M1422.5 412V445M1424.5 429V451M1426.5 420V443M1428.5 404V425M1430.5 399V419M1432.5 399V415M1434.5 404V430M1436.5 416V431M1438.5 411V423M1440.5 410V440M1442.5 433V447M1444.5 409V442M1446.5 418V456M1448.5 424V456M1450.5 423V439M1452.5 426V441M1454.5 418V434M1456.5 411V423M1458.5 419V430M1460.5 406V433M1462.5 405V416M1464.5 406V417M1466.5 408V416M1468.5 412V424M1470.5 420V430M1472.5 416V430M1474.5 392V404M1476.5 395V401M1478.5 393V405M1480.5 401V410M1482.5 400V409M1484.5 399V404M1486.5 402V408M1488.5 403V414M1490.5 411V421M1492.5 416V424M1494.5 400V417M1496.5 401V405" stroke="#00ff00" stroke-width="1" fill="none" shape-rendering="crispEdges"/>
<path d="M540.9 202.7h2.5v-2.4l4 3.700l-4 3.700v-2.400h-2.500z" fill="#0000ff" stroke="#fff" stroke-width="1.600" stroke-linejoin="miter" paint-order="stroke"/>
<path d="M564.5 199.1v8l-5.300 -4z" fill="#808080" stroke="#fff" stroke-width="1.100"/>
<path d="M557.1 205.5h2.5v-2.4l4 3.700l-4 3.700v-2.400h-2.500z" fill="#0000ff" stroke="#fff" stroke-width="1.600" stroke-linejoin="miter" paint-order="stroke"/>
<path d="M604.5 189.2v8l-5.300 -4z" fill="#808080" stroke="#fff" stroke-width="1.100"/>
<path d="M715.0 175.9h2.5v-2.4l4 3.700l-4 3.700v-2.400h-2.500z" fill="#ff0000" stroke="#fff" stroke-width="1.600" stroke-linejoin="miter" paint-order="stroke"/>
<path d="M757.0 180.9h2.5v-2.4l4 3.700l-4 3.700v-2.400h-2.500z" fill="#ff0000" stroke="#fff" stroke-width="1.600" stroke-linejoin="miter" paint-order="stroke"/>
<path d="M786.2 183.7v8l-5.300 -4z" fill="#808080" stroke="#fff" stroke-width="1.100"/>
<path d="M883.3 222.9h2.5v-2.4l4 3.700l-4 3.700v-2.400h-2.500z" fill="#0000ff" stroke="#fff" stroke-width="1.600" stroke-linejoin="miter" paint-order="stroke"/>
<path d="M872.5 239.7v8l-5.300 -4z" fill="#808080" stroke="#fff" stroke-width="1.100"/>
<path d="M866.7 231.5h2.5v-2.4l4 3.700l-4 3.700v-2.400h-2.500z" fill="#0000ff" stroke="#fff" stroke-width="1.600" stroke-linejoin="miter" paint-order="stroke"/>
<path d="M930.4 269.6h2.5v-2.4l4 3.700l-4 3.700v-2.400h-2.500z" fill="#0000ff" stroke="#fff" stroke-width="1.600" stroke-linejoin="miter" paint-order="stroke"/>
<path d="M945.8 281.2v8l-5.300 -4z" fill="#808080" stroke="#fff" stroke-width="1.100"/>
<path d="M941.3 273.6h2.5v-2.4l4 3.700l-4 3.700v-2.400h-2.500z" fill="#0000ff" stroke="#fff" stroke-width="1.600" stroke-linejoin="miter" paint-order="stroke"/>
<path d="M972.7 283.1h2.5v-2.4l4 3.700l-4 3.700v-2.400h-2.500z" fill="#0000ff" stroke="#fff" stroke-width="1.600" stroke-linejoin="miter" paint-order="stroke"/>
<path d="M984.1 285.0v8l-5.300 -4z" fill="#808080" stroke="#fff" stroke-width="1.100"/>
<path d="M962.9 319.7h2.5v-2.4l4 3.700l-4 3.700v-2.400h-2.500z" fill="#0000ff" stroke="#fff" stroke-width="1.600" stroke-linejoin="miter" paint-order="stroke"/>
<path d="M1478.1 399.3v8l-5.300 -4z" fill="#808080" stroke="#fff" stroke-width="1.100"/>
<path d="M1489.2 410.3h2.5v-2.4l4 3.700l-4 3.700v-2.400h-2.500z" fill="#ff0000" stroke="#fff" stroke-width="1.600" stroke-linejoin="miter" paint-order="stroke"/>
<path d="M5.5 523.5V74.5H1873.5V523.5" stroke="#fff" fill="none" shape-rendering="crispEdges"/>
<path d="M5 523.5H1874" stroke="#fff" fill="none" shape-rendering="crispEdges"/>
<path d="M5.5 749.5V525.5H1873.5V749.5" stroke="#fff" fill="none" shape-rendering="crispEdges"/>
<path d="M5 749.5H1874" stroke="#fff" fill="none" shape-rendering="crispEdges"/>
<path d="M5.5 974.5V751.5H1873.5V974.5" stroke="#fff" fill="none" shape-rendering="crispEdges"/>
<path d="M5 974.5H1874" stroke="#fff" fill="none" shape-rendering="crispEdges"/>
<path d="M1874 91.5h3M1874 124.5h3M1874 157.5h3M1874 190.5h3M1874 223.5h3M1874 256.5h3M1874 289.5h3M1874 322.5h3M1874 355.5h3M1874 388.5h3M1874 421.5h3M1874 454.5h3M1874 487.5h3M1874 520.5h3M1874 527.5h2M1874 635.5h2M1874 748.5h2M1874 753.5h2M1874 971.5h2" stroke="#fff" fill="none" shape-rendering="crispEdges"/>
<rect x="1875" y="397" width="41" height="11" fill="#fff"/>
<text transform="translate(1879,762) scale(.885,1)" font-family="Liberation Sans, sans-serif" font-size="10.4" fill="#fff">9966.52</text><rect x="1875" y="757" width="41" height="11" fill="#32cd32"/>
<path d="M6.5 975v3M70.5 975v3M134.5 975v3M198.5 975v3M262.5 975v3M326.5 975v3M390.5 975v3M454.5 975v3M518.5 975v3M582.5 975v3M646.5 975v3M710.5 975v3M774.5 975v3M838.5 975v3M902.5 975v3M966.5 975v3M1030.5 975v3M1094.5 975v3M1158.5 975v3M1222.5 975v3M1286.5 975v3M1350.5 975v3M1414.5 975v3M1478.5 975v3" stroke="#fff" fill="none" shape-rendering="crispEdges"/>
<path d="M6.0 640.0L10.0 642.4M24.0 638.0L30.0 637.0M38.0 635.6L42.0 632.0M42.0 632.0L52.0 629.6M86.0 634.0L92.0 633.6M92.0 633.6L99.0 635.6M99.0 635.6L104.0 630.0M104.0 630.0L109.0 621.0M109.0 621.0L113.0 619.0M168.0 631.0L180.0 630.4M180.0 630.4L188.0 624.4M188.0 624.4L194.0 623.4M212.0 632.6L218.0 630.0M218.0 630.0L226.0 623.0M226.0 623.0L236.0 618.6M240.0 618.3L248.0 618.0M248.0 618.0L262.0 615.0M262.0 615.0L270.0 610.6M270.0 610.6L280.0 608.4M294.0 612.6L300.0 613.6M318.0 630.0L328.0 638.0M328.0 638.0L336.0 640.4M354.0 635.0L362.0 635.0M370.0 637.6L384.0 639.0M384.0 639.0L392.0 650.0M392.0 650.0L402.0 657.0M402.0 657.0L408.0 657.6M454.0 646.0L462.0 650.6M484.0 641.0L488.0 643.6M496.0 635.6L504.0 639.0M504.0 639.0L516.0 642.4M516.0 642.4L524.0 645.6M524.0 645.6L538.0 649.0M538.0 649.0L546.0 650.4M550.0 651.0L560.0 653.0M560.0 653.0L580.0 657.0M580.0 657.0L582.0 657.6M603.0 646.0L616.0 648.6M616.0 648.6L628.0 651.6M643.0 646.0L654.0 648.6M661.0 646.0L672.0 648.0M683.0 634.0L686.0 625.0M686.0 625.0L694.0 614.0M694.0 614.0L706.0 603.0M706.0 603.0L716.0 595.0M774.0 631.0L780.0 632.0M786.0 633.0L798.0 636.0M798.0 636.0L803.0 626.0M803.0 626.0L805.0 625.0M807.0 624.6L814.0 620.0M836.0 634.4L844.0 632.4M844.0 632.4L849.0 627.4M860.0 634.4L872.0 626.0M872.0 626.0L882.0 617.4M906.0 634.6L915.0 632.0M920.0 637.0L928.0 654.0M928.0 654.0L938.0 664.0M938.0 664.0L948.0 676.0M948.0 676.0L956.0 700.0M956.0 700.0L966.0 717.0M993.0 675.0L998.0 688.0M998.0 688.0L1006.0 698.0M1028.0 676.0L1036.0 689.0M1036.0 689.0L1044.0 689.6M1070.0 634.0L1078.0 621.0M1078.0 621.0L1081.0 620.4M1090.0 624.0L1102.0 624.0M1102.0 624.0L1112.0 613.0M1112.0 613.0L1125.0 605.6M1130.0 607.6L1136.0 605.6M1156.0 625.4L1160.0 622.4M1168.0 631.0L1172.0 643.0M1172.0 643.0L1178.0 667.0M1178.0 667.0L1186.0 695.0M1186.0 695.0L1194.0 706.0M1194.0 706.0L1201.0 710.6M1210.0 700.0L1214.0 701.4M1238.0 672.0L1242.0 669.4M1267.0 635.0L1272.0 591.0M1272.0 591.0L1280.0 549.0M1280.0 549.0L1287.0 537.4M1310.0 561.0L1318.0 562.0M1318.0 562.0L1322.0 560.0M1344.0 634.0L1352.0 643.0M1352.0 643.0L1360.0 663.0M1360.0 663.0L1368.0 668.0M1368.0 668.0L1379.0 675.0M1402.0 664.6L1410.0 671.4M1422.0 661.0L1426.0 660.0M1440.0 641.6L1448.0 646.0M1448.0 646.0L1454.0 647.4M1454.0 647.4L1460.0 644.0M1468.0 635.0L1474.0 633.0M1474.0 633.0L1478.0 623.0M1478.0 623.0L1485.0 618.4M1489.0 618.8L1492.0 619.4M1492.0 619.4L1496.4 618.0" stroke="#00ffff" stroke-width="1.25" fill="none" stroke-linecap="round"/>
<path d="M10.0 642.4L16.0 642.0M16.0 642.0L24.0 638.0M30.0 637.0L38.0 635.6M52.0 629.6L60.0 631.0M60.0 631.0L70.0 632.4M70.0 632.4L80.0 632.6M80.0 632.6L86.0 634.0M113.0 619.0L120.0 620.0M120.0 620.0L132.0 623.0M132.0 623.0L144.0 627.4M144.0 627.4L156.0 628.0M156.0 628.0L168.0 631.0M194.0 623.4L200.0 628.4M200.0 628.4L212.0 632.6M236.0 618.6L240.0 618.3M280.0 608.4L288.0 611.6M288.0 611.6L294.0 612.6M300.0 613.6L310.0 623.0M310.0 623.0L318.0 630.0M336.0 640.4L344.0 639.0M344.0 639.0L354.0 635.0M362.0 635.0L370.0 637.6M408.0 657.6L420.0 656.0M420.0 656.0L432.0 653.0M432.0 653.0L442.0 649.4M442.0 649.4L454.0 646.0M462.0 650.6L474.0 647.0M474.0 647.0L484.0 641.0M488.0 643.6L496.0 635.6M546.0 650.4L550.0 651.0M582.0 657.6L592.0 651.0M592.0 651.0L603.0 646.0M628.0 651.6L643.0 646.0M654.0 648.6L661.0 646.0M672.0 648.0L677.0 648.0M677.0 648.0L680.0 642.0M680.0 642.0L683.0 634.0M716.0 595.0L728.0 599.0M728.0 599.0L736.0 603.0M736.0 603.0L742.0 608.0M742.0 608.0L754.0 610.6M754.0 610.6L762.0 618.0M762.0 618.0L768.0 626.0M768.0 626.0L774.0 631.0M780.0 632.0L786.0 633.0M805.0 625.0L807.0 624.6M814.0 620.0L824.0 624.0M824.0 624.0L836.0 634.4M849.0 627.4L854.0 633.0M854.0 633.0L860.0 634.4M882.0 617.4L892.0 623.0M892.0 623.0L900.0 632.0M900.0 632.0L906.0 634.6M915.0 632.0L920.0 637.0M966.0 717.0L976.0 700.0M976.0 700.0L984.0 685.0M984.0 685.0L993.0 675.0M1006.0 698.0L1016.0 685.0M1016.0 685.0L1028.0 676.0M1044.0 689.6L1052.0 678.0M1052.0 678.0L1060.0 664.0M1060.0 664.0L1064.0 646.0M1064.0 646.0L1070.0 634.0M1081.0 620.4L1084.0 620.6M1084.0 620.6L1090.0 624.0M1125.0 605.6L1130.0 607.6M1136.0 605.6L1144.0 617.0M1144.0 617.0L1152.0 624.6M1152.0 624.6L1156.0 625.4M1160.0 622.4L1168.0 631.0M1201.0 710.6L1210.0 700.0M1214.0 701.4L1221.0 701.0M1221.0 701.0L1228.0 683.0M1228.0 683.0L1238.0 672.0M1242.0 669.4L1250.0 666.0M1250.0 666.0L1256.0 657.0M1256.0 657.0L1263.0 650.0M1263.0 650.0L1267.0 635.0M1287.0 537.4L1292.0 538.0M1292.0 538.0L1300.0 551.0M1300.0 551.0L1310.0 561.0M1322.0 560.0L1328.0 575.0M1328.0 575.0L1336.0 607.0M1336.0 607.0L1344.0 634.0M1379.0 675.0L1392.0 673.0M1392.0 673.0L1402.0 664.6M1410.0 671.4L1422.0 661.0M1426.0 660.0L1432.0 649.0M1432.0 649.0L1440.0 641.6M1460.0 644.0L1468.0 635.0M1485.0 618.4L1489.0 618.8" stroke="#ff0000" stroke-width="1.25" fill="none" stroke-linecap="round"/>
<polyline points="6.0,634.4 16.0,633.6 24.0,630.4 36.0,630.0 44.0,629.6 56.0,629.0 69.0,629.0 80.0,633.6 90.0,639.0 100.0,639.6 110.0,633.0 119.0,630.6 130.0,632.6 144.0,634.0 156.0,633.2 168.0,634.0 174.0,631.0 182.0,631.0 192.0,637.0 202.0,642.4 214.0,641.6 224.0,638.0 240.0,635.0 252.0,633.0 266.0,629.0 280.0,629.6 296.0,629.6 306.0,630.6 314.0,629.0 324.0,629.6 336.0,631.0 346.0,636.0 354.0,639.0 362.0,638.0 370.0,634.0 384.0,634.0 392.0,636.0 402.0,640.4 412.0,641.0 424.0,643.0 434.0,641.6 452.0,637.0 464.0,637.6 472.0,635.0 480.0,633.6 492.0,639.0 504.0,639.0 516.0,640.0 526.0,642.0 538.0,647.6 546.0,648.0 554.0,646.6 568.0,637.0 578.0,634.0 588.0,624.0 598.0,618.6 604.0,618.0 614.0,620.4 628.0,626.0 642.0,629.6 652.0,631.6 664.0,635.6 678.0,635.6 692.0,634.4 700.0,632.0 724.0,631.6 740.0,632.4 754.0,630.0 762.0,630.4 768.0,634.0 780.0,637.0 798.0,638.6 808.0,642.0 818.0,654.0 832.0,665.0 842.0,678.0 852.0,698.0 860.0,710.0 868.0,721.0 874.0,726.0 878.0,724.0 888.0,708.0 896.0,699.6 906.0,693.0 916.0,687.0 924.0,690.0 931.0,692.0 938.0,687.0 949.0,678.0 958.0,685.0 965.0,681.0 978.0,654.0 988.0,632.0 992.0,628.0 996.0,635.0 1002.0,648.0 1008.0,653.0 1014.0,649.0 1020.0,644.0 1028.0,649.0 1036.0,663.0 1042.0,663.6 1050.0,657.0 1058.0,642.0 1064.0,630.0 1072.0,620.0 1080.0,621.0 1086.0,623.0 1094.0,619.0 1102.0,617.4 1110.0,623.0 1118.0,629.6 1124.0,631.0 1130.0,635.0 1138.0,629.0 1144.0,632.0 1152.0,643.0 1158.0,645.0 1166.0,639.0 1172.0,649.0 1178.0,663.0 1188.0,673.0 1196.0,677.0 1204.0,684.0 1212.0,683.0 1217.0,688.0 1222.0,688.0 1232.0,676.0 1242.0,677.0 1250.0,682.0 1256.0,680.0 1265.0,669.0 1268.0,647.0 1274.0,619.0 1280.0,603.0 1286.0,595.0 1294.0,592.4 1302.0,600.0 1312.0,609.0 1318.0,610.6 1322.0,609.0 1328.0,621.0 1336.0,649.0 1344.0,671.0 1352.0,687.0 1358.0,709.0 1368.0,730.0 1376.0,734.0 1388.0,733.4 1393.0,737.0 1402.0,732.0 1410.0,726.0 1417.0,709.0 1425.0,715.0 1432.0,706.0 1438.0,703.4 1443.0,707.0 1449.0,705.0 1460.0,687.0 1472.0,671.0 1480.0,662.0 1488.0,657.4 1496.4,657.0" stroke="#00ff00" stroke-width="2.2" fill="none" stroke-linejoin="round" stroke-linecap="round"/>
<polyline points="6.0,629.0 12.0,627.0 19.0,626.0 28.0,628.0 38.0,629.6 46.0,634.0 56.0,634.4 66.0,632.0 76.0,635.0 84.0,637.0 90.0,640.4 100.0,639.0 109.0,647.6 116.0,647.0 132.0,645.0 148.0,641.6 166.0,638.4 177.0,635.0 186.0,643.0 195.0,650.4 200.0,649.6 210.0,645.6 218.0,645.6 226.0,649.6 234.0,651.4 240.0,651.4 244.0,650.0 252.0,650.6 264.0,650.0 272.0,654.4 282.0,656.6 290.0,652.4 302.0,651.6 312.0,640.0 320.0,634.4 328.0,628.0 334.0,626.0 340.0,628.0 350.0,635.0 358.0,638.0 364.0,637.0 370.0,632.0 378.0,630.0 384.0,630.0 392.0,621.6 400.0,619.0 412.0,619.0 420.0,622.0 436.0,624.0 452.0,626.0 458.0,625.6 464.0,623.0 476.0,622.6 486.0,629.6 490.0,630.0 496.0,638.4 502.0,637.0 512.0,634.0 524.0,632.4 532.0,634.0 550.0,633.0 556.0,630.0 570.0,617.0 578.0,612.0 588.0,605.4 598.0,605.4 602.0,607.0 614.0,606.6 628.0,609.0 642.0,618.4 654.0,618.0 664.0,624.4 670.0,623.0 678.0,623.0 682.0,634.0 686.0,647.0 690.0,653.0 696.0,655.0 706.0,664.0 716.0,671.0 724.0,669.0 734.0,666.0 742.0,659.0 756.0,654.0 768.0,642.4 776.0,640.0 788.0,639.6 798.0,637.6 802.0,644.0 808.0,653.0 814.0,665.0 824.0,670.6 834.0,669.6 842.0,682.0 850.0,700.0 858.0,709.0 868.0,728.0 874.0,737.0 880.0,737.4 888.0,722.0 898.0,707.0 912.0,690.0 918.0,689.0 934.0,668.0 948.0,638.0 960.0,610.0 968.0,594.0 972.0,592.0 976.0,592.6 986.0,588.0 997.0,585.0 1006.0,589.0 1012.0,594.0 1020.0,597.0 1028.0,608.0 1040.0,609.6 1044.0,607.0 1058.0,607.4 1064.0,617.0 1074.0,625.0 1082.0,638.0 1092.0,630.0 1100.0,628.0 1108.0,636.0 1116.0,651.0 1126.0,661.0 1132.0,662.0 1140.0,656.0 1147.0,650.0 1152.0,654.0 1158.0,656.0 1164.0,646.0 1170.0,643.0 1178.0,627.0 1188.0,610.0 1196.0,605.0 1201.0,605.0 1206.0,615.0 1216.0,621.4 1221.0,622.0 1228.0,631.0 1236.0,637.0 1246.0,644.6 1254.0,657.0 1264.0,656.0 1268.0,667.0 1276.0,683.0 1284.0,690.6 1290.0,690.6 1304.0,681.0 1312.0,681.0 1324.0,684.0 1334.0,676.0 1339.0,676.0 1346.0,671.4 1356.0,683.0 1361.0,687.0 1367.0,696.0 1374.0,696.0 1381.0,694.0 1388.0,695.0 1394.0,698.6 1403.0,701.0 1410.0,689.0 1417.0,678.6 1424.0,688.0 1429.0,694.0 1435.0,692.0 1441.0,699.0 1446.0,699.0 1452.0,687.0 1462.0,676.0 1470.0,675.6 1476.0,678.0 1488.0,674.0 1496.4,674.0" stroke="#1e90ff" stroke-width="2.2" fill="none" stroke-linejoin="round" stroke-linecap="round"/>
<line x1="6" y1="763.5" x2="1873" y2="763.5" stroke="#32cd32" stroke-dasharray="3 3" shape-rendering="crispEdges"/>
<rect x="546" y="752" width="1" height="222" fill="#0000b0"/>
<rect x="560" y="752" width="1" height="222" fill="#0000b0"/>
<rect x="562" y="752" width="1" height="222" fill="#0000b0"/>
<rect x="600" y="752" width="1" height="222" fill="#0000b0"/>
<rect x="762" y="752" width="1" height="222" fill="#b00000"/>
<rect x="782" y="752" width="1" height="222" fill="#b00000"/>
<rect x="848" y="752" width="1" height="222" fill="#0000b0"/>
<rect x="868" y="752" width="1" height="222" fill="#0000b0"/>
<rect x="936" y="752" width="1" height="222" fill="#0000b0"/>
<rect x="942" y="752" width="1" height="222" fill="#0000b0"/>
<rect x="978" y="752" width="1" height="222" fill="#b00000"/>
<rect x="980" y="752" width="1" height="222" fill="#b00000"/>
<rect x="1450" y="752" width="1" height="222" fill="#0000b0"/>
<rect x="1474" y="752" width="1" height="222" fill="#0000b0"/>
<polyline points="6.0,929.1 544.6,929.1 545.7,935.0 547.9,923.5 550.5,942.7 553.8,947.0 556.2,929.6 560.0,927.8 561.5,924.0 564.3,930.7 569.8,934.0 572.4,934.4 576.4,942.3 578.6,936.0 580.3,937.3 582.5,917.5 584.7,916.4 587.3,907.7 588.9,906.6 590.2,895.6 592.8,901.0 596.0,907.7 598.3,889.7 600.2,888.6 760.8,888.6 762.5,903.3 764.7,916.4 766.9,937.3 768.7,935.0 770.8,962.9 772.4,947.0 774.6,923.0 776.0,916.0 777.9,923.0 780.0,944.5 782.4,944.5 846.8,944.5 849.0,929.6 850.0,883.6 852.3,868.3 854.0,854.7 855.4,859.5 856.3,889.0 858.2,861.7 860.0,874.8 862.2,877.0 864.4,866.0 866.6,857.3 868.7,856.0 934.0,856.0 935.5,867.0 937.2,866.0 938.0,846.0 938.3,827.7 941.6,827.7 943.0,826.6 976.2,826.6 977.3,832.8 980.0,832.0 1448.4,831.9 1449.5,847.4 1451.2,846.4 1452.3,833.2 1455.6,812.4 1456.6,811.3 1458.0,846.4 1459.0,845.3 1459.7,780.7 1462.7,780.7 1464.0,797.0 1467.0,801.5 1468.0,824.5 1469.8,840.3 1471.0,839.8 1472.0,826.6 1473.0,815.7 1473.6,763.0 1475.3,762.9 1496.6,762.9" stroke="#32cd32" stroke-width="2" fill="none" stroke-linejoin="round" stroke-linecap="round"/>
<path d="M9 81h7l-3.500 4z" fill="#fff"/>
<circle cx="1862.5" cy="84.500" r="5" fill="none" stroke="#fff" stroke-width="1"/><rect x="1860" y="82" width="1" height="2" fill="#fff"/><rect x="1864" y="82" width="1" height="2" fill="#fff"/><path d="M1860 86.500q2.500 2 5 0" stroke="#fff" fill="none"/>
<g font-family="Liberation Sans, sans-serif" font-size="10.4" fill="#fff"><text transform="translate(1879,95) scale(0.885,1)" >0.62840</text><text transform="translate(1879,128) scale(0.885,1)" >0.62420</text><text transform="translate(1879,161) scale(0.885,1)" >0.62010</text><text transform="translate(1879,194) scale(0.885,1)" >0.61600</text><text transform="translate(1879,227) scale(0.885,1)" >0.61190</text><text transform="translate(1879,260) scale(0.885,1)" >0.60780</text><text transform="translate(1879,293) scale(0.885,1)" >0.60370</text><text transform="translate(1879,326) scale(0.885,1)" >0.59960</text><text transform="translate(1879,359) scale(0.885,1)" >0.59550</text><text transform="translate(1879,392) scale(0.885,1)" >0.59130</text><text transform="translate(1879,425) scale(0.885,1)" >0.58720</text><text transform="translate(1879,458) scale(0.885,1)" >0.58310</text><text transform="translate(1879,491) scale(0.885,1)" >0.57900</text><text transform="translate(1879,524) scale(0.885,1)" >0.57490</text><text transform="translate(1878,536) scale(0.885,1)">1.0526</text><text transform="translate(1878,639) scale(0.885,1)">0.00</text><text transform="translate(1878,746) scale(0.885,1)">-1.1049</text><text transform="translate(1878,971) scale(0.885,1)">9858.51</text><text transform="translate(1879,406) scale(0.885,1)" fill="#000">0.58964</text><text transform="translate(1879,766) scale(0.885,1)" fill="#000">9961.62</text><text transform="translate(5,986.5) scale(0.913,1)">21 Mar 2025</text><text transform="translate(69,986.5) scale(0.913,1)">24 Mar 08:00</text><text transform="translate(133,986.5) scale(0.913,1)">25 Mar 00:00</text><text transform="translate(197,986.5) scale(0.913,1)">25 Mar 16:00</text><text transform="translate(261,986.5) scale(0.913,1)">26 Mar 08:00</text><text transform="translate(325,986.5) scale(0.913,1)">27 Mar 00:00</text><text transform="translate(389,986.5) scale(0.913,1)">27 Mar 16:00</text><text transform="translate(453,986.5) scale(0.913,1)">28 Mar 08:00</text><text transform="translate(517,986.5) scale(0.913,1)">31 Mar 01:00</text><text transform="translate(581,986.5) scale(0.913,1)">31 Mar 17:00</text><text transform="translate(645,986.5) scale(0.913,1)">1 Apr 09:00</text><text transform="translate(709,986.5) scale(0.913,1)">2 Apr 01:00</text><text transform="translate(773,986.5) scale(0.913,1)">2 Apr 17:00</text><text transform="translate(837,986.5) scale(0.913,1)">3 Apr 09:00</text><text transform="translate(901,986.5) scale(0.913,1)">4 Apr 01:00</text><text transform="translate(965,986.5) scale(0.913,1)">4 Apr 17:00</text><text transform="translate(1029,986.5) scale(0.913,1)">7 Apr 09:00</text><text transform="translate(1093,986.5) scale(0.913,1)">8 Apr 01:00</text><text transform="translate(1157,986.5) scale(0.913,1)">8 Apr 17:00</text><text transform="translate(1221,986.5) scale(0.913,1)">9 Apr 09:00</text><text transform="translate(1285,986.5) scale(0.913,1)">10 Apr 01:00</text><text transform="translate(1349,986.5) scale(0.913,1)">10 Apr 17:00</text><text transform="translate(1413,986.5) scale(0.913,1)">11 Apr 09:00</text><text transform="translate(1477,986.5) scale(0.913,1)">14 Apr 01:00</text><text transform="translate(21,86) scale(0.913,1)">CADCHF,M30</text><text transform="translate(88.5,86) scale(0.885,1)">0.58961 0.58973 0.58942 0.58964</text><text transform="translate(10,99) scale(0.913,1)" xml:space="preserve" style="white-space:pre">MagicNumber = 0 РЕЖИМ_РАБОТЫ = 1текущее_значение_разбежки = 0.1453</text><text transform="translate(10,111) scale(0.913,1)" xml:space="preserve" style="white-space:pre">Инструменты спреда, Символ: CADCHF &amp; USDCHF &amp; USDCAD&amp;</text><text transform="translate(10,123) scale(0.913,1)" xml:space="preserve" style="white-space:pre">ind_10 = -0.2106 ind_11 = -0.2224 ind_12 = -0.229</text><text transform="translate(10,135) scale(0.913,1)" xml:space="preserve" style="white-space:pre">ind_20 = -0.3796 ind_21 = -0.379 ind_22 = -0.3765</text><text transform="translate(10,147) scale(0.913,1)" xml:space="preserve" style="white-space:pre">ind_30 = 0 ind_31 = 0 ind_32 = 0</text><text transform="translate(10,159) scale(0.913,1)" xml:space="preserve" style="white-space:pre">BufS0 =  0 BufS1 =  0</text><text transform="translate(10,171) scale(0.913,1)" xml:space="preserve" style="white-space:pre">Суммарный профит закрытия = $500</text><text transform="translate(10,183) scale(0.913,1)" xml:space="preserve" style="white-space:pre">Суммарный убыток закрытия = $-5000</text><text transform="translate(10,195) scale(0.913,1)" xml:space="preserve" style="white-space:pre">Текущий суммарный профит  = 0</text><text transform="translate(10,207) scale(0.913,1)" xml:space="preserve" style="white-space:pre">Трейлинг_Стоп = 100</text><text transform="translate(10,219) scale(0.913,1)" xml:space="preserve" style="white-space:pre">Уровень закрытия =0</text><text transform="translate(1855,87) scale(0.913,1)" text-anchor="end">Exp_Arbitr_Trailing_3 пары № 18 актуальный</text><text transform="translate(13,409) scale(0.875,1)" font-weight="bold" xml:space="preserve" style="white-space:pre">#704693738 sell 0.10</text><text transform="translate(10,538) scale(0.913,1)">Ind_2line+1_MQL -0.2080 -0.3772 0.1692 0.1692</text><text transform="translate(10,764) scale(0.913,1)">Equity_virtual Total 9961.62</text><text transform="translate(1870,765) scale(0.913,1)" text-anchor="end" fill="#708090">History: 2462 bars from 2025.01.30 19:30</text><text transform="translate(1870,775) scale(0.913,1)" text-anchor="end" fill="#708090">Recovery Factor: -0.22</text><text transform="translate(1870,785) scale(0.913,1)" text-anchor="end" fill="#708090">Absolute Drawdown: 176.89 $</text><text transform="translate(1870,795) scale(0.913,1)" text-anchor="end" fill="#708090">Maximal Drawdown: 176.89 $ (1.77%)</text><text transform="translate(1870,805) scale(0.913,1)" text-anchor="end" fill="#708090">Relative Drawdown: 1.77% (176.89 $)</text><text transform="translate(1870,825) scale(0.913,1)" text-anchor="end" fill="#708090">Gross Profit: 175.12 $</text><text transform="translate(1870,835) scale(0.913,1)" text-anchor="end" fill="#708090">Gross Loss: 213.50 $</text><text transform="translate(1870,845) scale(0.913,1)" text-anchor="end" fill="#708090">Total Net Profit: -38.38 $</text><text transform="translate(1870,855) scale(0.913,1)" text-anchor="end" fill="#708090">Profit Factor: 0.82</text><text transform="translate(1870,865) scale(0.913,1)" text-anchor="end" fill="#708090">Expected Payoff: -1.28</text><text transform="translate(1870,875) scale(0.913,1)" text-anchor="end" fill="#708090">Total Trades: 30</text><text transform="translate(1870,885) scale(0.913,1)" text-anchor="end" fill="#708090">Short Positions (won %): 12 (25.00%)</text><text transform="translate(1870,895) scale(0.913,1)" text-anchor="end" fill="#708090">Long Positions (won %): 18 (38.89%)</text><text transform="translate(1870,905) scale(0.913,1)" text-anchor="end" fill="#708090">Profit Trades (% of total): 10 (33.33%)</text><text transform="translate(1870,915) scale(0.913,1)" text-anchor="end" fill="#708090">Loss Trades (% of total): 20 (66.67%)</text><text transform="translate(1870,925) scale(0.913,1)" text-anchor="end" fill="#708090">Largest profit trade: 44.24</text><text transform="translate(1870,935) scale(0.913,1)" text-anchor="end" fill="#708090">Largest loss trade: -32.28</text><text transform="translate(1870,945) scale(0.913,1)" text-anchor="end" fill="#708090">Average profit trade: 17.51</text><text transform="translate(1870,955) scale(0.913,1)" text-anchor="end" fill="#708090">Average loss trade: -10.68</text></g>
<g font-family="Liberation Sans, sans-serif" font-size="13" text-anchor="end" letter-spacing="0.55"><text x="1869" y="544" fill="#00ff00">1.00= USDCHF =1.00</text><text x="1869" y="557" fill="#1e90ff">1.00= USDCAD =1.94</text><text x="1869" y="569" fill="#00ffff">Flat</text></g>
<g font-family="Liberation Sans, sans-serif" fill="#fff" fill-opacity="0.46"><text x="1393" y="966" font-size="20.1">Активация Windows</text><text x="1393" y="985.500" font-size="15">Чтобы активировать Windows, перейдите в раздел "Параметры".</text></g></svg>
<div style="position:absolute;left:0;top:995px;width:1921px;height:24px;background:#f0f0f0"></div><div style="position:absolute;left:0;top:997px;width:1921px;height:1px;background:#222"></div><div style="position:absolute;left:0;top:995px;width:1921px;height:2px;background:#fff"></div><div style="position:absolute;left:2px;top:998px;width:2px;height:18px;background:#777"></div><div style="position:absolute;left:419px;top:997px;width:96px;height:18px;background:#fff;border:1px solid #000;border-top:none;box-sizing:border-box;box-shadow:1px 1px 0 #000"></div><div style="position:absolute;left:0;top:998px;width:1883px;height:18px;overflow:hidden;color:#6d6d6d;white-space:nowrap"><span style="position:absolute;left:18.3px;top:3.5px;font-size:11px;letter-spacing:-0.190px">EURUSD,M30</span><span style="position:absolute;left:98.8px;top:3px;width:1px;height:13px;background:#555"></span><span style="position:absolute;left:110.0px;top:3.5px;font-size:11px;letter-spacing:0.023px">US500,M15</span><span style="position:absolute;left:178.8px;top:3px;width:1px;height:13px;background:#555"></span><span style="position:absolute;left:190.0px;top:3.5px;font-size:11px;letter-spacing:0.298px">WTI,M30</span><span style="position:absolute;left:247.2px;top:3px;width:1px;height:13px;background:#555"></span><span style="position:absolute;left:258.3px;top:3.5px;font-size:11px;letter-spacing:-0.208px">COPPER,H1</span><span style="position:absolute;left:331.2px;top:3px;width:1px;height:13px;background:#555"></span><span style="position:absolute;left:341.0px;top:3.5px;font-size:11px;letter-spacing:0.148px">CHFJPY,M30</span><span style="position:absolute;left:430.7px;top:3.5px;font-size:11px;letter-spacing:0.353px;color:#000">CADCHF,M30</span><span style="position:absolute;left:526.0px;top:3.5px;font-size:11px;letter-spacing:0.163px">EURCHF,M30</span><span style="position:absolute;left:607.2px;top:3px;width:1px;height:13px;background:#555"></span><span style="position:absolute;left:618.3px;top:3.5px;font-size:11px;letter-spacing:0.103px">BRN,M30</span><span style="position:absolute;left:678.8px;top:3px;width:1px;height:13px;background:#555"></span><span style="position:absolute;left:690.0px;top:3.5px;font-size:11px;letter-spacing:-0.267px">EURJPY,H1</span><span style="position:absolute;left:758.8px;top:3px;width:1px;height:13px;background:#555"></span><span style="position:absolute;left:771.0px;top:3.5px;font-size:11px;letter-spacing:0.186px">AUDJPY,M30</span><span style="position:absolute;left:851.2px;top:3px;width:1px;height:13px;background:#555"></span><span style="position:absolute;left:862.7px;top:3.5px;font-size:11px;letter-spacing:0.231px">NZDUSD,M30</span><span style="position:absolute;left:946.8px;top:3px;width:1px;height:13px;background:#555"></span><span style="position:absolute;left:957.3px;top:3.5px;font-size:11px;letter-spacing:0.108px">USDCHF,H1</span><span style="position:absolute;left:1031.2px;top:3px;width:1px;height:13px;background:#555"></span><span style="position:absolute;left:1042.3px;top:3.5px;font-size:11px;letter-spacing:-0.195px">EURGBP,H1</span><span style="position:absolute;left:1115.2px;top:3px;width:1px;height:13px;background:#555"></span><span style="position:absolute;left:1126.0px;top:3.5px;font-size:11px;letter-spacing:-0.091px">GBPUSD,M30</span><span style="position:absolute;left:1207.2px;top:3px;width:1px;height:13px;background:#555"></span><span style="position:absolute;left:1218.3px;top:3.5px;font-size:11px;letter-spacing:-0.043px">US500,M30</span><span style="position:absolute;left:1286.8px;top:3px;width:1px;height:13px;background:#555"></span><span style="position:absolute;left:1298.3px;top:3.5px;font-size:11px;letter-spacing:-0.286px">COPPER,H1</span><span style="position:absolute;left:1370.5px;top:3px;width:1px;height:13px;background:#555"></span><span style="position:absolute;left:1381.0px;top:3.5px;font-size:11px;letter-spacing:-0.141px">XAGUSD,H1</span><span style="position:absolute;left:1454.5px;top:3px;width:1px;height:13px;background:#555"></span><span style="position:absolute;left:1466.7px;top:3.5px;font-size:11px;letter-spacing:0.201px">GBPNZD,M30</span><span style="position:absolute;left:1550.5px;top:3px;width:1px;height:13px;background:#555"></span><span style="position:absolute;left:1561.7px;top:3.5px;font-size:11px;letter-spacing:-0.091px">COPPER,M15</span><span style="position:absolute;left:1642.8px;top:3px;width:1px;height:13px;background:#555"></span><span style="position:absolute;left:1653.3px;top:3.5px;font-size:11px;letter-spacing:-0.150px">EURUSD,M15</span><span style="position:absolute;left:1734.5px;top:3px;width:1px;height:13px;background:#555"></span><span style="position:absolute;left:1745.7px;top:3.5px;font-size:11px;letter-spacing:-0.019px">EURGBP,M30</span><span style="position:absolute;left:1826.2px;top:3px;width:1px;height:13px;background:#555"></span><span style="position:absolute;left:1837.3px;top:3.5px;font-size:11px;letter-spacing:-0.274px">GBPJPY,M30</span></div><svg style="position:absolute;left:1884px;top:1000px" width="34" height="12"><path d="M8 2.500v7l-4-3.500zM22 2.500v7l4-3.500z" fill="#000"/></svg>
<div style="position:absolute;left:0;top:1017px;width:1921px;height:24px;background:#f0f0f0;color:#000;white-space:nowrap"><div style="position:absolute;left:0;top:0;width:1921px;height:1px;background:#fafafa"></div><div style="position:absolute;left:0;top:23px;width:1921px;height:1px;background:#222"></div><span style="position:absolute;left:3.3px;top:7px;font-size:12px;letter-spacing:-0.162px">Для вызова справки нажмите F1</span><span style="position:absolute;left:1234.0px;top:7px;font-size:12px;letter-spacing:-0.146px">Default</span><span style="position:absolute;left:1226.8px;top:4px;width:1px;height:18px;background:#a8a8a8"></span><span style="position:absolute;left:1349.0px;top:7px;font-size:12px;letter-spacing:-0.608px">2025.04.10 18:30</span><span style="position:absolute;left:1342.8px;top:4px;width:1px;height:18px;background:#a8a8a8"></span><span style="position:absolute;left:1451.0px;top:7px;font-size:12px;letter-spacing:-0.460px">O: 0.59111</span><span style="position:absolute;left:1444.5px;top:4px;width:1px;height:18px;background:#a8a8a8"></span><span style="position:absolute;left:1522.3px;top:7px;font-size:12px;letter-spacing:-0.531px">H: 0.59168</span><span style="position:absolute;left:1515.5px;top:4px;width:1px;height:18px;background:#a8a8a8"></span><span style="position:absolute;left:1593.3px;top:7px;font-size:12px;letter-spacing:-0.672px">L: 0.58945</span><span style="position:absolute;left:1586.2px;top:4px;width:1px;height:18px;background:#a8a8a8"></span><span style="position:absolute;left:1661.0px;top:7px;font-size:12px;letter-spacing:-0.641px">C: 0.59106</span><span style="position:absolute;left:1654.5px;top:4px;width:1px;height:18px;background:#a8a8a8"></span><span style="position:absolute;left:1730.7px;top:7px;font-size:12px;letter-spacing:-0.617px">V: 3684</span><span style="position:absolute;left:1724.5px;top:4px;width:1px;height:18px;background:#a8a8a8"></span><span style="position:absolute;left:1824.0px;top:7px;font-size:12px;letter-spacing:-0.396px">31835/91 kb</span><span style="position:absolute;left:1790.2px;top:4px;width:1px;height:18px;background:#a8a8a8"></span><svg style="position:absolute;left:0;top:1px" width="1921" height="23"><rect x="1797.0" y="6" width="2" height="8.7" fill="#557700"/><rect x="1797.0" y="15.7" width="2" height="3.3" fill="#003355"/><rect x="1800.1" y="6" width="2" height="6.8" fill="#557700"/><rect x="1800.1" y="13.8" width="2" height="5.2" fill="#003355"/><rect x="1803.1" y="6" width="2" height="6.1" fill="#557700"/><rect x="1803.1" y="13.1" width="2" height="5.9" fill="#003355"/><rect x="1806.2" y="6" width="2" height="4.8" fill="#557700"/><rect x="1806.2" y="11.8" width="2" height="7.2" fill="#003355"/><rect x="1809.3" y="6" width="2" height="3.9" fill="#557700"/><rect x="1809.3" y="10.9" width="2" height="8.1" fill="#003355"/><rect x="1812.3" y="6" width="2" height="3.2" fill="#557700"/><rect x="1812.3" y="10.2" width="2" height="8.8" fill="#003355"/><rect x="1815.4" y="6" width="2" height="2.3" fill="#557700"/><rect x="1815.4" y="9.3" width="2" height="9.7" fill="#003355"/><rect x="1818.5" y="6" width="2" height="1.5" fill="#557700"/><rect x="1818.5" y="8.5" width="2" height="10.5" fill="#003355"/><path d="M1920 9L1907 22M1920 13L1911 22M1920 17L1915 22" stroke="#9a9a9a" stroke-width="1.500"/></svg></div>
</body></html>
